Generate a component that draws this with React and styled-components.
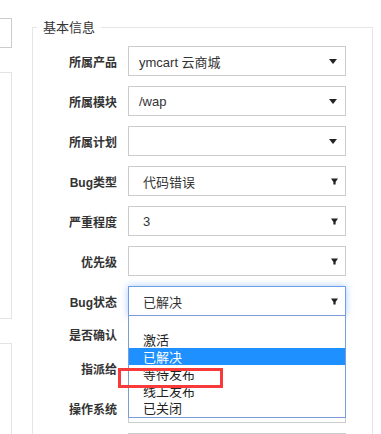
import React from "react";
import styled, { createGlobalStyle, css } from "styled-components";

const Global = createGlobalStyle`
  html, body { margin: 0; padding: 0; overflow: hidden; background: #fff; }
  body { font-family: "Liberation Sans", "Noto Sans CJK SC", sans-serif; color: #333; }
`;

const Page = styled.div`
  display: flex;
  align-items: flex-start;
  gap: 20px;
  width: 381px;
  height: 434px;
  overflow: hidden;
`;

const Side = styled.div`
  display: flex;
  flex-direction: column;
  gap: 24px;
  width: 12px;
  padding-top: 18px;
  flex: none;
`;

const SideBox = styled.div`
  box-sizing: border-box;
  width: 12px;
  height: ${(p) => p.$h}px;
  border: 1px solid ${(p) => (p.$dark ? "#cccccc" : "#e3e3e3")};
  border-left: none;
  ${(p) => p.$open && css`border-bottom: none;`}
`;

const Fieldset = styled.fieldset`
  box-sizing: border-box;
  width: 341px;
  min-width: 0;
  height: 460px;
  margin: 18px 0 0 0;
  padding: 10px 0 0 0;
  border: 1px solid #e5e5e5;
  border-bottom: none;
  flex: none;
`;

const Legend = styled.legend`
  margin-left: 4px;
  padding: 0 6px;
  font-size: 13px;
  line-height: 18px;
  color: #333;
  font-family: "Noto Sans CJK SC", sans-serif;
`;

const Form = styled.div`
  display: flex;
  flex-direction: column;
  gap: 10px;
`;

const Row = styled.div`
  display: grid;
  grid-template-columns: 84px 218px;
  column-gap: 11px;
  align-items: center;
  min-height: ${(p) => p.$h || 30}px;
`;

const Label = styled.div`
  text-align: right;
  font-size: 12px;
  font-weight: 700;
  color: #333;
  font-family: "Liberation Sans", "Noto Sans CJK SC", sans-serif;
  white-space: nowrap;
`;

const Select = styled.div`
  position: relative;
  box-sizing: border-box;
  height: 30px;
  display: flex;
  align-items: center;
  justify-content: space-between;
  padding: 0 ${(p) => (p.$native ? 7 : 8)}px 0 ${(p) => (p.$native ? 14 : 10)}px;
  border: 1px solid #cccccc;
  background: #fff;
  font-size: 13px;
  color: #333;
  font-family: "Liberation Sans", "Noto Sans CJK SC", sans-serif;
  ${(p) =>
    p.$focus &&
    css`
      border-color: #6c9de6;
      box-shadow: 0 0 7px rgba(102, 160, 240, 0.55);
    `}
`;

const Caret = styled.span`
  width: 0;
  height: 0;
  border-left: 4px solid transparent;
  border-right: 4px solid transparent;
  border-top: 5px solid #222;
`;

const NativeArrow = () => (
  <svg width="7" height="7" viewBox="0 0 7 7">
    <path d="M0 0.5 H7 L4.6 4 V6.5 H2.4 V4 Z" fill="#222" />
  </svg>
);

const Dropdown = styled.ul`
  position: absolute;
  top: 100%;
  left: -1px;
  right: -1px;
  z-index: 2;
  margin: 0;
  padding: 0 0 1px 0;
  list-style: none;
  background: #fff;
  border: 1px solid #7b9cd6;
`;

const Option = styled.li`
  box-sizing: border-box;
  height: ${(p) => (p.$blank ? 15 : 17)}px;
  line-height: 17px;
  padding-left: 14px;
  font-size: 13px;
  font-family: "Noto Sans CJK SC", sans-serif;
  color: ${(p) => (p.$active ? "#fff" : "#222")};
  background: ${(p) => (p.$active ? "#1e90ff" : "transparent")};
  overflow: hidden;
`;

const Mark = styled.div`
  position: absolute;
  z-index: 3;
  left: -11px;
  top: 81px;
  width: 105px;
  height: 20px;
  box-sizing: border-box;
  border: 3px solid #f83a3a;
`;

const fields = [
  { label: "所属产品", value: "ymcart 云商城" },
  { label: "所属模块", value: "/wap" },
  { label: "所属计划", value: "" },
  { label: "Bug类型", value: "代码错误", native: true },
  { label: "严重程度", value: "3", native: true },
  { label: "优先级", value: "", native: true },
];

const options = ["", "激活", "已解决", "等待发布", "线上发布", "已关闭"];

export default function App() {
  return (
    <>
      <Global />
      <Page>
        <Side>
          <SideBox $h={30} $dark />
          <SideBox $h={247} />
          <SideBox $h={200} $open />
        </Side>
        <Fieldset>
          <Legend>基本信息</Legend>
          <Form>
            {fields.map((f) => (
              <Row key={f.label}>
                <Label>{f.label}</Label>
                <Select $native={f.native}>
                  <span>{f.value}</span>
                  {f.native ? <NativeArrow /> : <Caret />}
                </Select>
              </Row>
            ))}
            <Row>
              <Label>Bug状态</Label>
              <Select $native $focus>
                <span>已解决</span>
                <NativeArrow />
                <Dropdown>
                  {options.map((o, i) => (
                    <Option key={i} $blank={o === ""} $active={o === "已解决"}>
                      {o}
                    </Option>
                  ))}
                </Dropdown>
                <Mark />
              </Select>
            </Row>
            <Row $h={16}>
              <Label>是否确认</Label>
              <div />
            </Row>
            <Row>
              <Label>指派给</Label>
              <Select />
            </Row>
            <Row>
              <Label>操作系统</Label>
              <Select />
            </Row>
            <Row>
              <Label />
              <Select />
            </Row>
          </Form>
        </Fieldset>
      </Page>
    </>
  );
}
